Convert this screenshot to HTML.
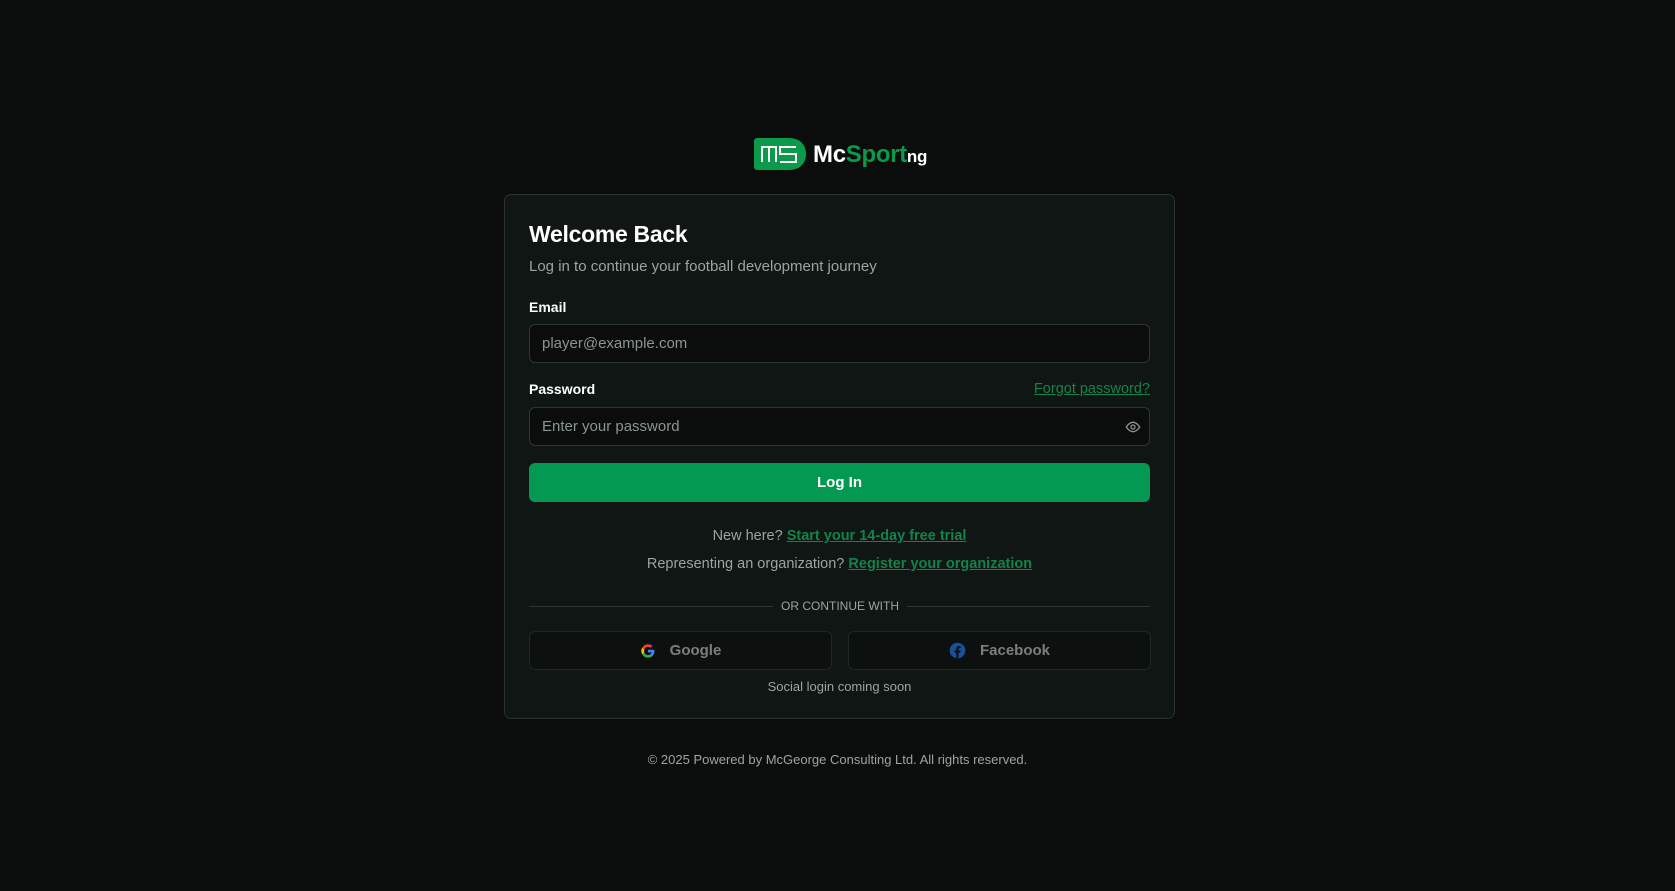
<!DOCTYPE html>
<html><head><meta charset="utf-8"><style>
*{box-sizing:border-box;margin:0;padding:0}
body{width:1675px;height:891px;background:#0a0d0c;font-family:"Liberation Sans",sans-serif;position:relative;overflow:hidden;color:#fff}
.abs{position:absolute}
.card{left:504px;top:194px;width:671px;height:525px;background:#0f1613;border:1px solid #2a332f;border-radius:7px}
.t{left:529px;white-space:nowrap}
.inp{left:529px;width:621px;height:39px;border:1px solid #2d3632;border-radius:6px;background:#0a0d0c;color:#8a9690;font-size:15px;padding-left:12px;line-height:37px}
.btn{left:529px;top:463px;width:621px;height:39px;background:#039950;border-radius:6px;text-align:center;line-height:39px;font-weight:bold;font-size:15px}
.g{color:#13834a;text-decoration:underline;font-weight:bold}
.sb{top:631px;width:303px;height:39px;border:1px solid #1f2824;border-radius:6px;background:#0c110f;color:#7a7f7d;font-weight:bold;font-size:15px;display:flex;align-items:center;justify-content:center;gap:14px}
.c{left:504px;width:671px;text-align:center;color:#9aa69f;font-size:14.5px}
</style></head><body>
<svg class="abs" style="left:754px;top:138px" width="52" height="32" viewBox="0 0 52 32"><path d="M0 3a3 3 0 0 1 3-3h32c10 0 17 6 17 16s-7 16-17 16H3a3 3 0 0 1-3-3z" fill="#0a9a4a"/><g fill="none" stroke="#fff" stroke-width="2"><path d="M8 24V9h14v15M15 9v15"/><path d="M42 9H26v7h16v8H26"/></g></svg>
<div class="abs" style="left:813px;top:141px;font-size:24px;font-weight:bold;letter-spacing:-0.3px">Mc<span style="color:#0a9a4a">Sport</span><span style="font-size:17px">ng</span></div>
<div class="abs card"></div>
<div class="abs t" style="top:221px;font-size:23px;font-weight:bold;letter-spacing:-0.3px">Welcome Back</div>
<div class="abs t" style="top:258px;font-size:15px;color:#9aa69f">Log in to continue your football development journey</div>
<div class="abs t" style="top:299px;font-size:14px;font-weight:bold">Email</div>
<div class="abs inp" style="top:324px">player@example.com</div>
<div class="abs t" style="top:381px;font-size:14px;font-weight:bold">Password</div>
<div class="abs" style="right:525px;top:381px;font-size:14.5px;color:#13834a;text-decoration:underline">Forgot password?</div>
<div class="abs inp" style="top:407px">Enter your password</div>
<svg class="abs" style="left:1125px;top:419px" width="16" height="16" viewBox="0 0 24 24" fill="none" stroke="#8a9690" stroke-width="2"><path d="M2 12s4-7 10-7 10 7 10 7-4 7-10 7S2 12 2 12z"/><circle cx="12" cy="12" r="3"/></svg>
<div class="abs btn">Log In</div>
<div class="abs c" style="top:528px">New here? <span class="g">Start your 14-day free trial</span></div>
<div class="abs c" style="top:556px">Representing an organization? <span class="g">Register your organization</span></div>
<div class="abs" style="left:529px;top:606px;width:621px;height:1px;background:#2d3632"></div>
<div class="abs" style="left:773px;top:598px;width:134px;height:17px;background:#0f1613;text-align:center;font-size:12px;color:#9aa69f;line-height:17px">OR CONTINUE WITH</div>
<div class="abs sb" style="left:529px"><svg width="16" height="16" viewBox="0 0 24 24"><path d="M21.6 12.2c0-.7-.1-1.4-.2-2H12v3.8h5.4a4.6 4.6 0 0 1-2 3v2.5h3.2c1.9-1.7 3-4.3 3-7.3z" fill="#4285f4"/><path d="M12 22c2.7 0 5-.9 6.6-2.4l-3.2-2.5c-.9.6-2 1-3.4 1-2.6 0-4.8-1.8-5.6-4.1H3.1v2.6A10 10 0 0 0 12 22z" fill="#34a853"/><path d="M6.4 14c-.2-.6-.3-1.3-.3-2s.1-1.4.3-2V7.4H3.1a10 10 0 0 0 0 9.2z" fill="#fbbc05"/><path d="M12 5.9c1.5 0 2.8.5 3.8 1.5l2.9-2.9A10 10 0 0 0 3.1 7.4L6.4 10c.8-2.3 3-4.1 5.6-4.1z" fill="#ea4335"/></svg>Google</div>
<div class="abs sb" style="left:848px"><svg width="17" height="17" viewBox="0 0 24 24"><circle cx="12" cy="12" r="11" fill="#1b4f9c"/><path d="M13.3 23v-8h2.6l.4-3h-3v-1.9c0-.9.3-1.5 1.6-1.5h1.6V5.9c-.3 0-1.2-.1-2.3-.1-2.3 0-3.9 1.4-3.9 4V12H7.7v3h2.6v8z" fill="#0c110f"/></svg>Facebook</div>
<div class="abs c" style="top:679px;font-size:13px">Social login coming soon</div>
<div class="abs" style="left:0;width:1675px;top:752px;text-align:center;font-size:13px;color:#9aa69f">© 2025 Powered by McGeorge Consulting Ltd. All rights reserved.</div>
</body></html>
